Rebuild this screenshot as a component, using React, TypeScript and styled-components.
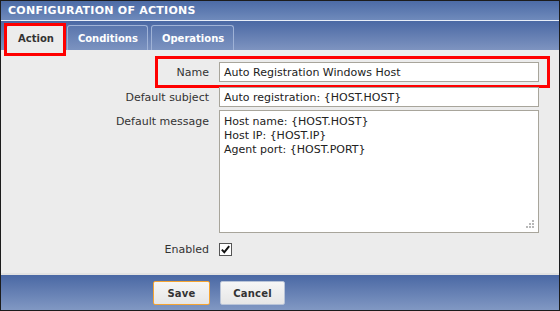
import React from "react";
import styled, { createGlobalStyle, css } from "styled-components";

const Global = createGlobalStyle`
  html, body { margin: 0; padding: 0; background: #fff; }
  body { font-family: "DejaVu Sans", Verdana, sans-serif; }
  * { box-sizing: border-box; }
`;

const Frame = styled.div`
  width: 560px;
  height: 311px;
  border: 1px solid #1c1c1c;
  display: flex;
  flex-direction: column;
  background: #ececec;
  overflow: hidden;
`;

const TitleBar = styled.div`
  height: 20px;
  flex: none;
  display: flex;
  align-items: center;
  padding-left: 7px;
  background: linear-gradient(#4c6ba6, #6f8abb);
  color: #fff;
  font-weight: bold;
  font-size: 11px;
  letter-spacing: 0.25px;
  border-bottom: 1px solid #e8eef8;
`;

const TabBar = styled.div`
  height: 29px;
  flex: none;
  display: flex;
  align-items: flex-end;
  gap: 3px;
  padding-left: 6px;
  background: linear-gradient(#4a68a4, #7e94c0);
`;

const Tab = styled.div<{ $active?: boolean }>`
  position: relative;
  height: 25px;
  padding: 0 9px 0 10px;
  display: flex;
  align-items: center;
  font-size: 10px;
  font-weight: bold;
  border: 1px solid #9fb2d6;
  border-bottom: none;
  border-radius: 3px 3px 0 0;
  color: #fff;
  background: linear-gradient(#5a76ad, #7c93c0);
  ${(p) =>
    p.$active &&
    css`
      background: #ececec;
      color: #333;
      border-color: #ececec;
    `}
`;

const Mark = styled.span<{ $t: number; $r: number; $b: number; $l: number }>`
  position: absolute;
  top: ${(p) => p.$t}px;
  right: ${(p) => p.$r}px;
  bottom: ${(p) => p.$b}px;
  left: ${(p) => p.$l}px;
  border: 3px solid #ff0000;
  pointer-events: none;
`;

const Content = styled.div`
  flex: 1;
  display: grid;
  grid-template-columns: 208px 320px;
  column-gap: 10px;
  align-content: start;
  padding-top: 12px;
  border-bottom: 2px solid #e2e2e2;
`;

const Label = styled.div<{ $top?: boolean; $mt?: number }>`
  text-align: right;
  font-size: 11px;
  color: #333;
  margin-top: ${(p) => p.$mt ?? 0}px;
  display: flex;
  justify-content: flex-end;
  align-items: ${(p) => (p.$top ? "flex-start" : "center")};
  padding-top: ${(p) => (p.$top ? 5 : 0)}px;
`;

const Field = styled.div<{ $mt?: number }>`
  position: relative;
  margin-top: ${(p) => p.$mt ?? 0}px;
  display: flex;
  align-items: center;
`;

const TextInput = styled.div`
  width: 320px;
  height: 20px;
  border: 1px solid #a8a59b;
  background: #fff;
  font-size: 11px;
  color: #222;
  padding-left: 4px;
  display: flex;
  align-items: center;
  white-space: nowrap;
`;

const TextArea = styled.div`
  position: relative;
  width: 320px;
  height: 123px;
  border: 1px solid #a8a59b;
  background: #fff;
  font-size: 11px;
  color: #222;
  padding: 4px 4px;
  line-height: 14px;
`;

const Grip = styled.svg`
  position: absolute;
  right: 4px;
  bottom: 4px;
`;

const Checkbox = styled.div`
  width: 13px;
  height: 13px;
  border: 1px solid #555;
  background: #fff;
  display: flex;
  align-items: center;
  justify-content: center;
`;

const Footer = styled.div`
  height: 35px;
  flex: none;
  display: flex;
  align-items: center;
  gap: 10px;
  padding-left: 152px;
  padding-top: 1px;
  background: linear-gradient(#4a68a4, #8198c3);
`;

const Button = styled.div<{ $focus?: boolean; $w: number }>`
  width: ${(p) => p.$w}px;
  height: 24px;
  display: flex;
  align-items: center;
  justify-content: center;
  font-size: 10px;
  font-weight: bold;
  letter-spacing: 0.2px;
  color: #333;
  background: linear-gradient(#f6f6f6, #e6e6e6);
  border: 1px solid ${(p) => (p.$focus ? "#f5a432" : "#b9c4d8")};
  border-radius: 2px;
`;

export default function App() {
  return (
    <>
      <Global />
      <Frame>
        <TitleBar>CONFIGURATION OF ACTIONS</TitleBar>
        <TabBar>
          <Tab $active>
            Action
            <Mark $t={-3} $r={-3} $b={-6} $l={-4} />
          </Tab>
          <Tab>Conditions</Tab>
          <Tab>Operations</Tab>
        </TabBar>
        <Content>
          <Label>Name</Label>
          <Field>
            <TextInput>Auto Registration Windows Host</TextInput>
            <Mark $t={-6} $r={-11} $b={-6} $l={-64} />
          </Field>
          <Label $mt={5}>Default subject</Label>
          <Field $mt={5}>
            <TextInput>Auto registration: {"{HOST.HOST}"}</TextInput>
          </Field>
          <Label $top $mt={3}>Default message</Label>
          <Field $mt={3}>
            <TextArea>
              Host name: {"{HOST.HOST}"}
              <br />
              Host IP: {"{HOST.IP}"}
              <br />
              Agent port: {"{HOST.PORT}"}
              <Grip width="9" height="9" viewBox="0 0 9 9">
                <g fill="#b8b8b8">
                  <rect x="7" y="1" width="2" height="2" />
                  <rect x="4" y="4" width="2" height="2" />
                  <rect x="7" y="4" width="2" height="2" />
                  <rect x="1" y="7" width="2" height="2" />
                  <rect x="4" y="7" width="2" height="2" />
                  <rect x="7" y="7" width="2" height="2" />
                </g>
              </Grip>
            </TextArea>
          </Field>
          <Label $mt={10}>Enabled</Label>
          <Field $mt={10}>
            <Checkbox>
              <svg width="9" height="9" viewBox="0 0 9 9">
                <path d="M0.8 4.6 L3.3 7.2 L8.2 1.2" fill="none" stroke="#111" strokeWidth="1.9" />
              </svg>
            </Checkbox>
          </Field>
        </Content>
        <Footer>
          <Button $focus $w={57}>Save</Button>
          <Button $w={65}>Cancel</Button>
        </Footer>
      </Frame>
    </>
  );
}
